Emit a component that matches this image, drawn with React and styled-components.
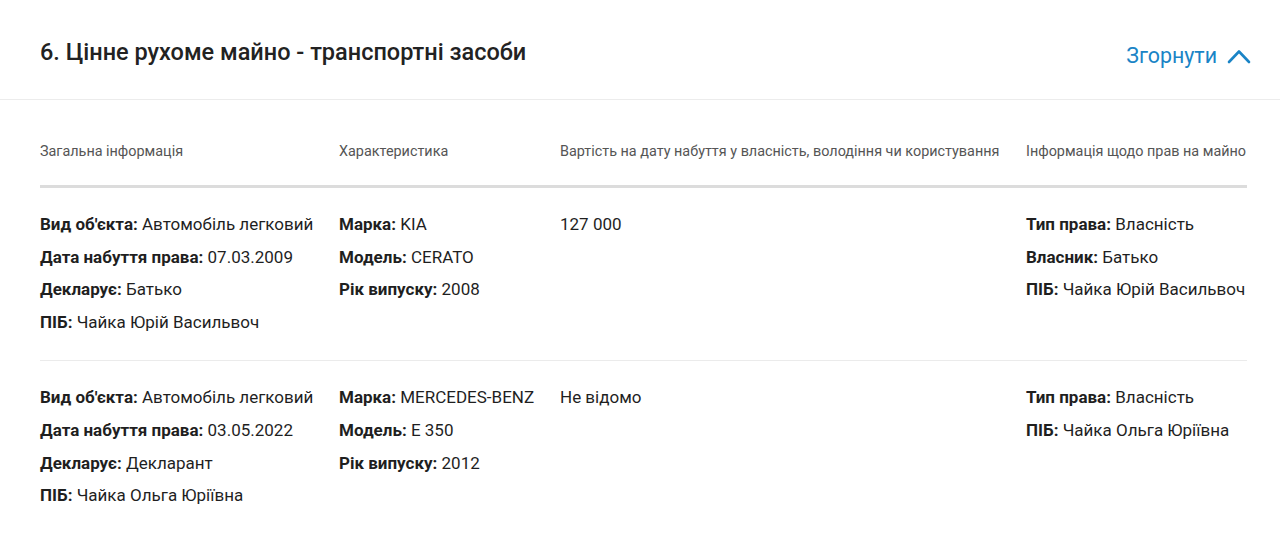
import React from "react";
import styled, { createGlobalStyle } from "styled-components";

const Global = createGlobalStyle`
  html, body { margin: 0; padding: 0; background: #fff; }
  body { font-family: Roboto, "Noto Sans", Arial, sans-serif; color: #222; }
`;

const Section = styled.section`
  width: 1280px;
  background: #fff;
`;

const Header = styled.header`
  height: 100px;
  box-sizing: border-box;
  display: flex;
  align-items: center;
  justify-content: space-between;
  padding: 4px 29px 0 40px;
  border-bottom: 1px solid #ececec;
`;

const Title = styled.h2`
  margin: 0;
  font-size: 23.5px;
  font-weight: 500;
  color: #222;
`;

const Toggle = styled.button`
  display: flex;
  align-items: center;
  gap: 10px;
  border: 0;
  background: none;
  padding: 8px 0 0;
  font-family: inherit;
  font-size: 21.4px;
  color: #1a84c6;
  cursor: pointer;
`;

const Table = styled.div`
  padding: 0 33px 0 40px;
`;

const Grid = styled.div`
  display: grid;
  grid-template-columns: 299px 221px 466px 1fr;
`;

const HeadRow = styled(Grid)`
  padding: 42px 0 23px;
  border-bottom: 3px solid #dcdcdc;
`;

const HeadCell = styled.div`
  font-size: 14.4px;
  line-height: 20px;
  color: #555;
  white-space: nowrap;
`;

const Row = styled(Grid)`
  padding: 20px 0 22px;
  border-bottom: ${(p) => (p.$last ? "none" : "1px solid #ebebeb")};
`;

const Cell = styled.div`
  display: flex;
  flex-direction: column;
`;

const Field = styled.div`
  font-size: 17px;
  line-height: 32.6px;
  color: #1f1f1f;
  white-space: nowrap;
  b { font-weight: 700; }
`;

const ChevronUp = () => (
  <svg width="24" height="16" viewBox="0 0 24 16" fill="none">
    <path d="M2 14 L12 3.5 L22 14" stroke="#1a84c6" strokeWidth="2.6" strokeLinecap="round" strokeLinejoin="round" />
  </svg>
);

const rows = [
  {
    general: [
      ["Вид об'єкта:", "Автомобіль легковий"],
      ["Дата набуття права:", "07.03.2009"],
      ["Декларує:", "Батько"],
      ["ПІБ:", "Чайка Юрій Васильвоч"],
    ],
    chars: [
      ["Марка:", "KIA"],
      ["Модель:", "CERATO"],
      ["Рік випуску:", "2008"],
    ],
    cost: "127 000",
    rights: [
      ["Тип права:", "Власність"],
      ["Власник:", "Батько"],
      ["ПІБ:", "Чайка Юрій Васильвоч"],
    ],
  },
  {
    general: [
      ["Вид об'єкта:", "Автомобіль легковий"],
      ["Дата набуття права:", "03.05.2022"],
      ["Декларує:", "Декларант"],
      ["ПІБ:", "Чайка Ольга Юріївна"],
    ],
    chars: [
      ["Марка:", "MERCEDES-BENZ"],
      ["Модель:", "E 350"],
      ["Рік випуску:", "2012"],
    ],
    cost: "Не відомо",
    rights: [
      ["Тип права:", "Власність"],
      ["ПІБ:", "Чайка Ольга Юріївна"],
    ],
  },
];

const Fields = ({ items }) => (
  <Cell>
    {items.map(([k, v], i) => (
      <Field key={i}>
        <b>{k}</b> {v}
      </Field>
    ))}
  </Cell>
);

export default function App() {
  return (
    <>
      <Global />
      <Section>
        <Header>
          <Title>6. Цінне рухоме майно - транспортні засоби</Title>
          <Toggle>
            Згорнути <ChevronUp />
          </Toggle>
        </Header>
        <Table>
          <HeadRow>
            <HeadCell>Загальна інформація</HeadCell>
            <HeadCell>Характеристика</HeadCell>
            <HeadCell>Вартість на дату набуття у власність, володіння чи користування</HeadCell>
            <HeadCell>Інформація щодо прав на майно</HeadCell>
          </HeadRow>
          {rows.map((r, i) => (
            <Row key={i} $last={i === rows.length - 1}>
              <Fields items={r.general} />
              <Fields items={r.chars} />
              <Cell>
                <Field>{r.cost}</Field>
              </Cell>
              <Fields items={r.rights} />
            </Row>
          ))}
        </Table>
      </Section>
    </>
  );
}
